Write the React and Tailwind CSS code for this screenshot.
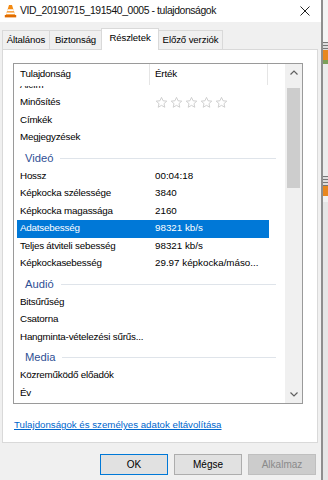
import React from "react";

const rows = [
  { k: "Alcím" },
  { k: "Minősítés", stars: true },
  { k: "Címkék" },
  { k: "Megjegyzések" },
  { group: "Videó" },
  { k: "Hossz", v: "00:04:18" },
  { k: "Képkocka szélessége", v: "3840" },
  { k: "Képkocka magassága", v: "2160" },
  { k: "Adatsebesség", v: "98321 kb/s", sel: true },
  { k: "Teljes átviteli sebesség", v: "98321 kb/s" },
  { k: "Képkockasebesség", v: "29.97 képkocka/máso..." },
  { group: "Audió" },
  { k: "Bitsűrűség" },
  { k: "Csatorna" },
  { k: "Hangminta-vételezési sűrűs..." },
  { group: "Media" },
  { k: "Közreműködő előadók" },
  { k: "Év" },
];

function VlcIcon() {
  return (
    <svg width="13" height="14" viewBox="0 0 13 14">
      <path d="M5 1h3l3.2 10H1.8z" fill="#f48a12" />
      <path d="M3.6 5.2h5.8l.6 2H3z" fill="#fff" />
      <path d="M2.5 8.6h8l.5 1.6H2z" fill="#fff" />
      <path d="M0.8 11h11.4v2.4H0.8z" fill="#e06b00" />
    </svg>
  );
}

function Star() {
  return (
    <svg width="13" height="13" viewBox="0 0 24 24">
      <path
        d="M12 2.5l2.9 6.3 6.8.7-5.1 4.6 1.5 6.7L12 17.3l-6.1 3.5 1.5-6.7-5.1-4.6 6.8-.7z"
        fill="none"
        stroke="#c9c9c9"
        strokeWidth="1.6"
        strokeLinejoin="round"
      />
    </svg>
  );
}

function Row({ row }) {
  if (row.group) {
    return (
      <div className="h-[21px] flex items-center pt-[2px] pl-[11px]">
        <span className="text-[#2f4f94] text-[11.2px] tracking-[0px]">{row.group}</span>
        <div className="flex-1 h-px bg-[#dfe4ea] ml-[7px] mr-[9px]" />
      </div>
    );
  }
  return (
    <div className="h-[17.5px] flex items-center">
      <div
        className={`ml-[3px] w-[252px] h-full flex items-center ${
          row.sel ? "bg-[#0078d7] text-white" : ""
        }`}
      >
        <div className="w-[133px] pl-[3px] whitespace-nowrap">{row.k}</div>
        <div className="pl-[5px] whitespace-nowrap flex gap-[2px] tracking-[0px]">
          {row.stars ? [0, 1, 2, 3, 4].map((i) => <Star key={i} />) : row.v}
        </div>
      </div>
    </div>
  );
}

export default function App() {
  return (
    <div className="w-[328px] h-[480px] flex overflow-hidden font-['Liberation_Sans',Arial,sans-serif] text-[10px] text-black">
      {/* dialog */}
      <div className="w-[321px] h-full flex flex-col bg-[#f0f0f0]">
        {/* title bar */}
        <div className="h-[22px] bg-white flex items-center pl-[4px] pr-[11px]">
          <VlcIcon />
          <span className="ml-[3px] text-[10.4px] tracking-[-0.4px] text-[#111]">
            VID_20190715_191540_0005 - tulajdonságok
          </span>
          <svg className="ml-auto" width="10" height="10" viewBox="0 0 10 10">
            <path d="M0.5 0.5l9 9M9.5 0.5l-9 9" stroke="#222" strokeWidth="1" />
          </svg>
        </div>

        {/* tabs */}
        <div className="mt-[6px] h-[21px] flex items-end pl-[2px] text-[9.6px] tracking-[-0.1px]">
          <div className="w-[48px] h-[19px] flex items-center justify-center border border-b-0 border-[#d9d9d9]">
            Általános
          </div>
          <div className="w-[53px] h-[19px] -ml-px flex items-center justify-center border border-b-0 border-[#d9d9d9]">
            Biztonság
          </div>
          <div className="relative z-10 w-[58px] h-[22px] -ml-px -mb-px flex items-center justify-center pb-[2px] bg-white border border-b-0 border-[#d9d9d9]">
            Részletek
          </div>
          <div className="w-[65px] h-[19px] -ml-px flex items-center justify-center border border-b-0 border-[#d9d9d9]">
            Előző verziók
          </div>
        </div>

        {/* panel */}
        <div className="ml-[2px] w-[316px] h-[394px] bg-white border border-[#d9d9d9] pt-[13px] pl-[10px]">
          <div className="w-[290px] h-[341px] border border-[#9a9a9a] flex text-[9.8px] tracking-[-0.2px]">
            <div className="w-[271px] flex flex-col">
              <div className="h-[22px] flex items-center shrink-0 pb-[1px]">
                <div className="w-[136px] h-full flex items-center pl-[6px] border-r border-[#e5e5e5]">
                  Tulajdonság
                </div>
                <div className="w-[118px] h-full flex items-center pl-[5px] border-r border-[#e5e5e5]">
                  Érték
                </div>
              </div>
              <div className="flex-1 overflow-hidden">
                <div className="-mt-[9.5px]">
                  {rows.map((r, i) => (
                    <Row key={i} row={r} />
                  ))}
                </div>
              </div>
            </div>
            {/* scrollbar */}
            <div className="w-[17px] bg-[#f0f0f0] flex flex-col items-center">
              <div className="h-[17px] flex items-center justify-center">
                <svg width="8" height="5" viewBox="0 0 8 5">
                  <path d="M0.5 4.5L4 1l3.5 3.5" fill="none" stroke="#606060" strokeWidth="1.2" />
                </svg>
              </div>
              <div className="mt-[7px] w-[13px] h-[100px] bg-[#cdcdcd]" />
              <div className="flex-1" />
              <div className="h-[17px] flex items-center justify-center">
                <svg width="8" height="5" viewBox="0 0 8 5">
                  <path d="M0.5 0.5L4 4l3.5-3.5" fill="none" stroke="#606060" strokeWidth="1.2" />
                </svg>
              </div>
            </div>
          </div>
          <div className="mt-[14px] ml-[1px] text-[9.7px] text-[#0066cc] underline">
            Tulajdonságok és személyes adatok eltávolítása
          </div>
        </div>

        {/* buttons */}
        <div className="pt-[11px] pr-[5px] flex justify-end gap-[6px] text-[10px]">
          <button className="w-[68px] h-[21px] bg-[#e1e1e1] border border-[#0078d7] flex items-center justify-center">
            OK
          </button>
          <button className="w-[68px] h-[21px] bg-[#e1e1e1] border border-[#adadad] flex items-center justify-center">
            Mégse
          </button>
          <button className="w-[68px] h-[21px] bg-[#cccccc] border border-[#bfbfbf] text-[#8a8a8a] flex items-center justify-center">
            Alkalmaz
          </button>
        </div>
      </div>

      {/* desktop edge */}
      <div className="w-[2px] h-full bg-[#8e8e8e]" />
      <div className="flex-1 h-full flex flex-col bg-[#e4e4e4]">
        <div className="h-[42px] bg-[#f4f4f4]" />
        <div className="h-[8px] bg-[repeating-linear-gradient(#777_0_1px,#ddd_1px_3px)]" />
        <div className="h-[10px] bg-[#e8871e]" />
        <div className="h-[4px] bg-[#7da05a]" />
        <div className="h-[112px] bg-[#ececec]" />
        <div className="h-[10px] bg-[repeating-linear-gradient(#777_0_1px,#ddd_1px_3px)]" />
        <div className="h-[10px] bg-[#e8871e]" />
        <div className="h-[6px] bg-[#f2f2f2]" />
        <div className="flex-1 bg-[#e6e6e6]" />
      </div>
    </div>
  );
}
